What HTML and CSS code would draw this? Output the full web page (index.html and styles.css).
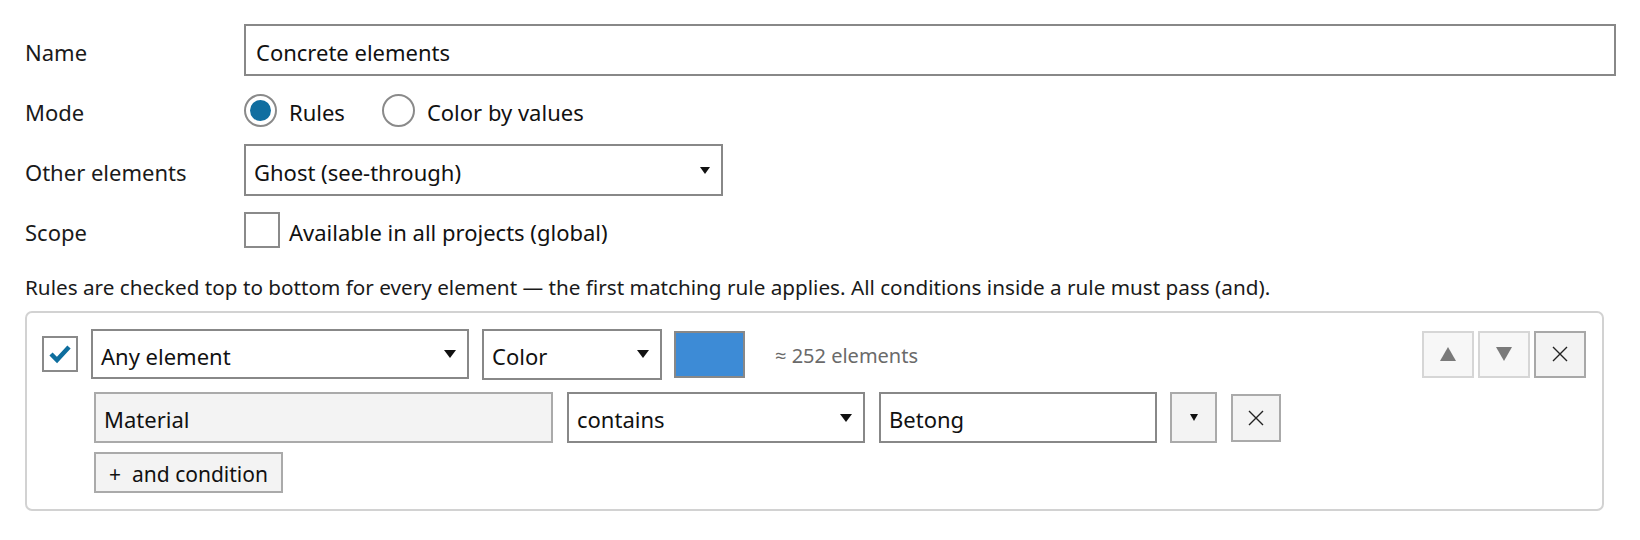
FILE: index.html
```html
<!DOCTYPE html>
<html lang="en">
<head>
    <meta charset="UTF-8">
    <title>Color profile</title>
    <link rel="stylesheet" href="styles.css">
</head>
<body>
    <div class="profile-form">
        <label class="form-label">Name</label>
        <div class="text-field">Concrete elements</div>

        <label class="form-label">Mode</label>
        <div class="radio-group">
            <span class="radio checked"></span><span class="radio-text">Rules</span>
            <span class="radio"></span><span class="radio-text">Color by values</span>
        </div>

        <label class="form-label">Other elements</label>
        <div class="select select-other">Ghost (see-through)</div>

        <label class="form-label">Scope</label>
        <div class="check-row">
            <span class="checkbox"></span><span>Available in all projects (global)</span>
        </div>
    </div>

    <p class="hint">Rules are checked top to bottom for every element — the first matching rule applies. All conditions inside a rule must pass (and).</p>

    <div class="rule-card">
        <div class="rule-head">
            <span class="checkbox checked">
                <svg width="24" height="20" viewBox="0 0 24 20"><polyline points="3,10 9,16 21,3" fill="none" stroke="#0e6e9e" stroke-width="4.5"/></svg>
            </span>
            <div class="select select-target">Any element</div>
            <div class="select select-action">Color</div>
            <div class="swatch" style="background-color: #3d8bd6;"></div>
            <span class="match-count">≈ 252 elements</span>
            <div class="rule-tools">
                <button class="tool-btn disabled"><span class="arrow-up"></span></button>
                <button class="tool-btn disabled"><span class="arrow-down"></span></button>
                <button class="tool-btn">
                    <svg width="18" height="18" viewBox="0 0 18 18"><path d="M2 2 L16 16 M16 2 L2 16" stroke="#222" stroke-width="1.4"/></svg>
                </button>
            </div>
        </div>

        <div class="condition">
            <div class="field-name">Material</div>
            <div class="select select-op">contains</div>
            <div class="text-field value-field">Betong</div>
            <button class="mini-btn"><span class="mini-arrow"></span></button>
            <button class="remove-btn">
                <svg width="18" height="18" viewBox="0 0 18 18"><path d="M2 2 L16 16 M16 2 L2 16" stroke="#222" stroke-width="1.4"/></svg>
            </button>
        </div>

        <button class="add-btn">+&nbsp; and condition</button>
    </div>
</body>
</html>
```

FILE: styles.css
```css
body {
    font-family: "Noto Sans", "Open Sans", sans-serif;
    font-size: 22px;
    color: #111;
    margin: 0;
    padding: 24px 24px 0 25px;
    background-color: #fff;
}

/* top form */
.profile-form {
    display: grid;
    grid-template-columns: 219px 1fr;
    grid-template-rows: 52px 36px 52px 36px;
    row-gap: 16px;
    align-items: center;
}

.form-label {
    color: #1a1a1a;
    padding-top: 3px;
}

.text-field {
    height: 52px;
    box-sizing: border-box;
    border: 2px solid #888;
    background-color: #fff;
    padding: 3px 10px 0;
    display: flex;
    align-items: center;
}

.radio-group {
    display: flex;
    align-items: center;
}

.radio {
    width: 33px;
    height: 33px;
    box-sizing: border-box;
    border: 2px solid #8a8a8a;
    border-radius: 50%;
    display: flex;
    align-items: center;
    justify-content: center;
}

.radio.checked::after {
    content: "";
    width: 21px;
    height: 21px;
    border-radius: 50%;
    background-color: #106ea0;
}

.radio-text {
    margin: 3px 37px 0 12px;
}

.select {
    position: relative;
    height: 52px;
    box-sizing: border-box;
    border: 2px solid #888;
    background-color: #fff;
    padding: 3px 36px 0 8px;
    display: flex;
    align-items: center;
}

.select::after {
    content: "";
    position: absolute;
    right: 11px;
    top: 50%;
    margin-top: -4px;
    border-left: 6px solid transparent;
    border-right: 6px solid transparent;
    border-top: 8px solid #111;
}

.select-other {
    width: 479px;
}

.select-other::after {
    right: 11px;
    margin-top: -3px;
    border-left-width: 5px;
    border-right-width: 5px;
    border-top-width: 7px;
}

.check-row {
    display: flex;
    align-items: center;
    gap: 9px;
}

.check-row span:last-child {
    padding-top: 3px;
}

.checkbox {
    width: 36px;
    height: 36px;
    box-sizing: border-box;
    border: 2px solid #8a8a8a;
    background-color: #fff;
    display: flex;
    align-items: center;
    justify-content: center;
    flex-shrink: 0;
}

.hint {
    font-size: 20.7px;
    line-height: 24px;
    margin: 27px 0 12px;
    color: #1a1a1a;
    white-space: nowrap;
}

/* rule card */
.rule-card {
    margin-right: 12px;
    border: 2px solid #d2d2d2;
    border-radius: 7px;
    padding: 16px 16px 16px 15px;
}

.rule-head {
    display: flex;
    align-items: center;
    height: 50px;
}

.rule-head .checkbox {
    margin-right: 13px;
}

.select-target {
    width: 378px;
    height: 50px;
    margin-right: 13px;
}

.select-action {
    width: 180px;
    height: 51px;
    margin-right: 12px;
}

.swatch {
    width: 71px;
    height: 47px;
    box-sizing: border-box;
    border: 2px solid #888;
    margin-right: 30px;
}

.match-count {
    font-size: 20px;
    color: #6a6a6a;
    padding-top: 3px;
}

.rule-tools {
    margin-left: auto;
    display: flex;
    gap: 4px;
}

.tool-btn {
    width: 52px;
    height: 47px;
    box-sizing: border-box;
    border: 2px solid #a8a8a8;
    background-color: #f3f3f3;
    display: flex;
    align-items: center;
    justify-content: center;
    padding: 0;
}

.tool-btn.disabled {
    border-color: #d6d6d6;
    background-color: #f7f7f7;
}

.arrow-up {
    border-left: 8px solid transparent;
    border-right: 8px solid transparent;
    border-bottom: 14px solid #7a7a7a;
}

.arrow-down {
    border-left: 8px solid transparent;
    border-right: 8px solid transparent;
    border-top: 14px solid #7a7a7a;
}

.condition {
    display: flex;
    align-items: center;
    margin: 13px 0 0 52px;
    height: 51px;
}

.field-name {
    width: 459px;
    height: 51px;
    box-sizing: border-box;
    border: 2px solid #aaa;
    background-color: #f3f3f3;
    padding: 3px 8px 0;
    display: flex;
    align-items: center;
    margin-right: 14px;
}

.select-op {
    width: 298px;
    height: 51px;
    margin-right: 14px;
}

.value-field {
    width: 278px;
    height: 51px;
    margin-right: 13px;
    padding-left: 8px;
}

.mini-btn {
    width: 47px;
    height: 51px;
    box-sizing: border-box;
    border: 2px solid #aaa;
    background-color: #f3f3f3;
    display: flex;
    align-items: center;
    justify-content: center;
    padding: 0;
    margin-right: 14px;
}

.mini-arrow {
    border-left: 4px solid transparent;
    border-right: 4px solid transparent;
    border-top: 7px solid #111;
}

.remove-btn {
    width: 50px;
    height: 48px;
    box-sizing: border-box;
    border: 2px solid #aaa;
    background-color: #f3f3f3;
    display: flex;
    align-items: center;
    justify-content: center;
    padding: 0;
}

.add-btn {
    display: block;
    margin: 9px 0 0 52px;
    height: 41px;
    width: 189px;
    box-sizing: border-box;
    border: 2px solid #aaa;
    background-color: #f3f3f3;
    font-family: inherit;
    font-size: 21px;
    color: #111;
    padding: 2px 0 0;
}
```
